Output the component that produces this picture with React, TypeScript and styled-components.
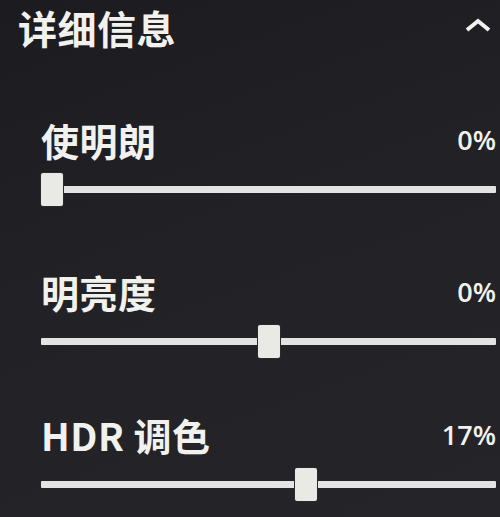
import React from 'react';
import styled, { createGlobalStyle } from 'styled-components';

const GlobalStyle = createGlobalStyle`
    html, body {
        margin: 0;
        padding: 0;
        background: #212025;
    }
`

const Panel = styled.div`
    width: 500px;
    height: 517px;
    box-sizing: border-box;
    overflow: hidden;
    background: linear-gradient(160deg, #1c1b20 0%, #222126 45%, #252428 100%);
    color: #f1f1ee;
    font-family: 'Noto Sans CJK SC', 'Open Sans', sans-serif;
    padding-top: 8px;
`

const Header = styled.div`
    display: flex;
    align-items: center;
    justify-content: space-between;
    padding: 0 9px 0 18px;
`

const HeaderTitle = styled.div`
    font-size: 39px;
    line-height: 39px;
    font-weight: 700;
    letter-spacing: 0.5px;
`

const Chevron = styled.svg`
    width: 26px;
    height: 14px;
    margin-top: -6px;
`

const SliderList = styled.div`
    display: flex;
    flex-direction: column;
    padding: 0 4px 0 41px;
`

const SliderRow = styled.div<{ $top: number }>`
    display: flex;
    flex-direction: column;
    gap: 14px;
    margin-top: ${p => p.$top}px;
`

const LabelRow = styled.div`
    display: flex;
    justify-content: space-between;
    align-items: flex-end;
`

const Label = styled.div`
    font-size: 38px;
    line-height: 39px;
    font-weight: 700;
    letter-spacing: 0.5px;
`

const Value = styled.div`
    font-family: 'Open Sans', 'Liberation Sans', sans-serif;
    font-size: 27px;
    line-height: 30px;
    font-weight: 600;
    margin-bottom: 4px;
`

const Track = styled.div`
    position: relative;
    height: 33px;
    display: flex;
    align-items: center;

    &::before {
        content: '';
        flex: 1;
        height: 7px;
        background: #e3e4e1;
        border-radius: 1px;
    }
`

const Thumb = styled.div`
    position: absolute;
    top: 0;
    width: 22px;
    height: 33px;
    background: #e9e9e6;
    border-radius: 2px;
    box-shadow: 0 0 0 1px #2a292d;
`

interface SliderProps {
    label: string,
    value: string,
    position: number,
    top: number
}

const Slider = ({ label, value, position, top }: SliderProps) => {
    return (
        <SliderRow $top={top}>
            <LabelRow>
                <Label>{label}</Label>
                <Value>{value}</Value>
            </LabelRow>
            <Track>
                <Thumb style={{ left: `calc((100% - 22px) * ${position})` }} />
            </Track>
        </SliderRow>
    )
}

const sliders = [
    { label: '使明朗', value: '0%', position: 0, top: 73 },
    { label: '明亮度', value: '0%', position: 0.5, top: 66 },
    { label: 'HDR 调色', value: '17%', position: 0.587, top: 57 }
]

export default function App() {
    return (
        <React.Fragment>
            <GlobalStyle />
            <Panel>
                <Header>
                    <HeaderTitle>详细信息</HeaderTitle>
                    <Chevron viewBox="0 0 26 14">
                        <polyline points="2,12 13,3 24,12" fill="none" stroke="#f1f1ee" strokeWidth="4" strokeLinejoin="miter" />
                    </Chevron>
                </Header>
                <SliderList>
                    {sliders.map(s => (
                        <Slider key={s.label} label={s.label} value={s.value} position={s.position} top={s.top} />
                    ))}
                </SliderList>
            </Panel>
        </React.Fragment>
    )
}
